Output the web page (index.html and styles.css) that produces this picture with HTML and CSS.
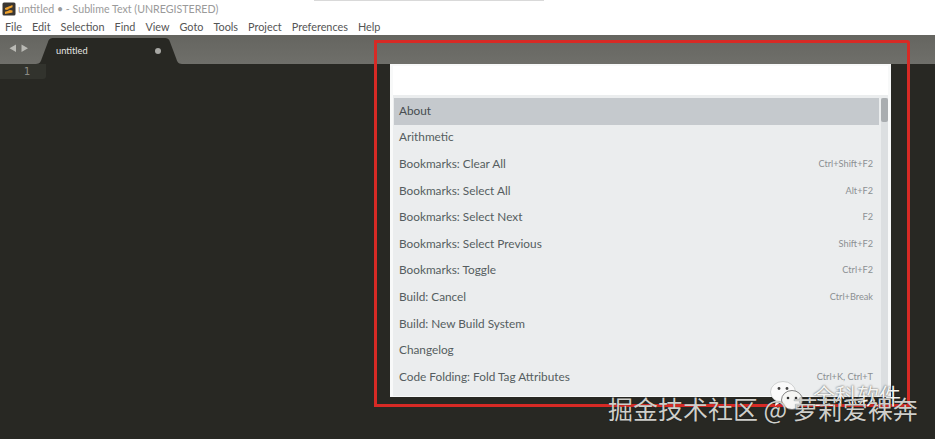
FILE: index.html
```html
<!DOCTYPE html>
<html lang="en">
<head>
<meta charset="utf-8">
<title>untitled • - Sublime Text (UNREGISTERED)</title>
<link rel="stylesheet" href="styles.css">
</head>
<body>
<div class="window">
  <header class="titlebar">
    <svg class="app-icon" width="14" height="14" viewBox="0 0 14 14"><rect x="0.5" y="0.5" width="13" height="13" rx="1.5" fill="#3a3632"/><path d="M3 6 L10.5 3 V5.2 L5 7.4 L10.5 8.4 V10.6 L3 12 V9.8 L7.8 8.6 L3 7.6 Z" fill="#f2a32c"/></svg>
    <span>untitled • - Sublime Text (UNREGISTERED)</span>
  </header>
  <nav class="menubar">
    <span>File</span><span>Edit</span><span>Selection</span><span>Find</span><span>View</span><span>Goto</span><span>Tools</span><span>Project</span><span>Preferences</span><span>Help</span>
  </nav>
  <div class="tabbar">
    <div class="arrows">
      <svg width="20" height="9" viewBox="0 0 20 9"><path d="M7 0.5 V8 L0.5 4.2 Z M12.5 0.5 V8 L19 4.2 Z" fill="#b9b9b4"/></svg>
    </div>
    <div class="tab">
      <svg class="tab-shape" width="146" height="27" viewBox="0 0 146 27" preserveAspectRatio="none"><path d="M0 27 C4 27 5 24 6 21 L12 5 C13 2 14 1 18 1 H128 C132 1 133 2 134 5 L140 21 C141 24 142 27 146 27 Z" fill="#282823"/></svg>
      <span class="tab-name">untitled</span>
      <span class="tab-dot"></span>
    </div>
  </div>
  <main class="editor">
    <div class="gutter">1</div>
  </main>
</div>

<div class="top-strip"></div>

<section class="palette">
  <div class="palette-input"></div>
  <div class="palette-body">
    <ul class="palette-list">
      <li class="selected"><span>About</span></li>
      <li><span>Arithmetic</span></li>
      <li><span>Bookmarks: Clear All</span><kbd>Ctrl+Shift+F2</kbd></li>
      <li><span>Bookmarks: Select All</span><kbd>Alt+F2</kbd></li>
      <li><span>Bookmarks: Select Next</span><kbd>F2</kbd></li>
      <li><span>Bookmarks: Select Previous</span><kbd>Shift+F2</kbd></li>
      <li><span>Bookmarks: Toggle</span><kbd>Ctrl+F2</kbd></li>
      <li><span>Build: Cancel</span><kbd>Ctrl+Break</kbd></li>
      <li><span>Build: New Build System</span></li>
      <li><span>Changelog</span></li>
      <li><span>Code Folding: Fold Tag Attributes</span><kbd>Ctrl+K, Ctrl+T</kbd></li>
    </ul>
    <div class="scrolltrack"><div class="scrollthumb"></div></div>
  </div>
</section>

<div class="highlight"></div>

<svg class="wechat" width="34" height="30" viewBox="0 0 34 30"><ellipse cx="13" cy="11" rx="12.5" ry="10.5" fill="#fafafa" stroke="#c4c6c6" stroke-width="0.8"/><path d="M6 19 L5 25 L11 21 Z" fill="#fafafa"/><ellipse cx="22" cy="19" rx="10.5" ry="9.5" fill="#f6f6f4" stroke="#666" stroke-width="0.8"/><circle cx="9" cy="7.5" r="1.4" fill="#444"/><circle cx="17" cy="7.5" r="1.4" fill="#444"/><circle cx="18" cy="17" r="1.3" fill="#333"/><circle cx="26" cy="17" r="1.3" fill="#333"/></svg>
<div class="mark-upper">全科软件</div>
<div class="mark-lower">掘金技术社区 @ 萝莉爱裸奔</div>
</body>
</html>
```
FILE: styles.css
```css
* { box-sizing: border-box; }
html, body { margin: 0; padding: 0; height: 100%; overflow: hidden; }
body { font-family: Lato, "Open Sans", sans-serif; background: #282823; position: relative; }
ul { margin: 0; padding: 0; list-style: none; }

.window { display: flex; flex-direction: column; height: 439px; }

.titlebar { height: 17px; flex: none; background: #fff; display: flex; align-items: center; gap: 2px; padding-left: 2px; color: #9a9a9a; font-size: 10.65px; }
.app-icon { flex: none; }
.top-strip { position: absolute; left: 314px; top: 0; width: 230px; height: 1px; background: #d9d9d9; }

.menubar { height: 18px; flex: none; background: #fff; display: flex; align-items: center; gap: 10px; padding-left: 5px; color: #555; font-size: 10.85px; }

.tabbar { height: 29px; flex: none; background: linear-gradient(#656560, #6f6f6a); display: flex; align-items: flex-end; }
.arrows { width: 36px; align-self: center; padding-left: 9px; display: flex; margin-top: -2px; }
.tab { position: relative; width: 146px; height: 27px; display: flex; align-items: center; padding: 0 0 0 20px; }
.tab-shape { position: absolute; left: 0; top: 0; }
.tab-name { position: relative; color: #e6e6e2; font-size: 9.3px; }
.tab-dot { position: absolute; left: 119px; top: 11px; width: 6px; height: 6px; border-radius: 50%; background: #a8a8a4; }

.editor { flex: 1; background: #282823; }
.gutter { width: 46px; height: 15px; background: #32332d; border-radius: 0 0 3px 0; color: #8b8b85; font-family: "DejaVu Sans Mono", monospace; font-size: 10.5px; line-height: 15px; text-align: right; padding-right: 16px; }

.palette { position: absolute; left: 390px; top: 64px; width: 501px; height: 333px; background: #ebedee; border: 3px solid #f8f9f9; border-top-width: 2px; border-bottom-width: 1px; display: flex; flex-direction: column; overflow: hidden; }
.palette-input { height: 29px; flex: none; background: #fff; }
.palette-body { display: flex; gap: 2px; padding: 3px 0 0 1px; min-height: 0; }
.palette-list { width: 485px; flex: none; }
.palette-list li { height: 26.6px; display: flex; align-items: center; justify-content: space-between; padding: 0 6px 2px 5px; color: #555d60; font-size: 11.8px; white-space: nowrap; }
.palette-list li.selected { background: #c5c9cd; color: #474d50; }
.palette-list kbd { font-family: inherit; font-size: 9.2px; color: #8b9093; }
.scrolltrack { width: 7px; flex: none; height: 300px; background: #dcdfe1; }
.scrollthumb { height: 24px; background: #a9adb0; border-radius: 2px; }

.highlight { position: absolute; left: 374px; top: 40px; width: 536px; height: 367px; border: 3px solid #d72a25; border-top-right-radius: 3px; pointer-events: none; }

.wechat { position: absolute; left: 770px; top: 381px; }
.mark-upper { position: absolute; left: 813px; top: 382px; font-family: "Noto Sans CJK SC", sans-serif; font-size: 22px; line-height: 24px; color: #f4f4f2; text-shadow: 0 0 2px rgba(0, 0, 0, 0.75); }
.mark-lower { position: absolute; left: 608px; top: 392px; font-family: "Noto Sans CJK SC", sans-serif; font-size: 25px; line-height: 32px; color: #cfcfcb; text-shadow: 0 0 1px rgba(0, 0, 0, 0.6); white-space: nowrap; }
```
